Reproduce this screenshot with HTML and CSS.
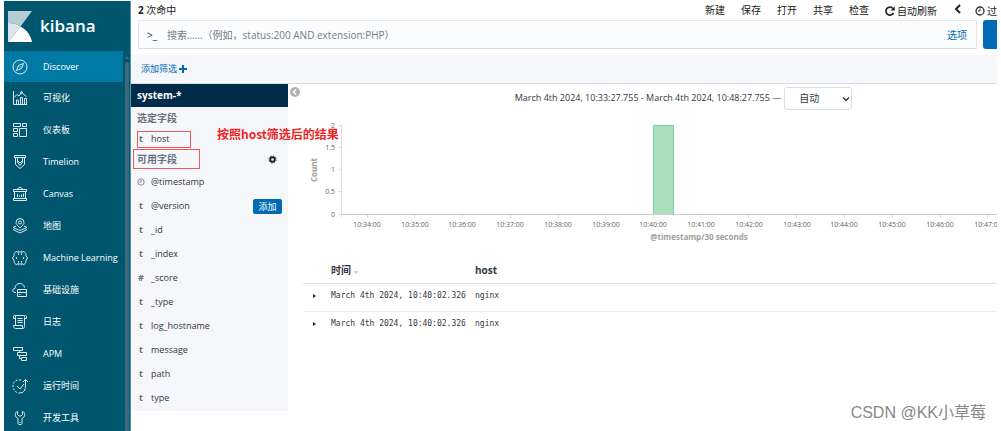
FILE: index.html
```html
<!DOCTYPE html>
<html lang="zh-CN">
<head>
<meta charset="utf-8">
<title>Kibana</title>
<link rel="stylesheet" href="styles.css">
</head>
<body>
<div class="app">
  <aside class="sidebar">
    <div class="brand">
      <svg class="brand-mark" viewBox="0 0 24 31" aria-hidden="true">
        <path fill="#b5cdd5" d="M0 0h24L12.500 15.500C9 13 5 12 0 12z"/>
        <path fill="#dbe7eb" d="M0 12c5 0 9 1 12.500 3.500L0 31z"/>
        <path fill="#fff" d="M12.500 15.500C19 19 23 25 24 31H0z"/>
      </svg>
      <span class="brand-name">kibana</span>
    </div>
    <nav class="nav">
      <a class="nav-item active" href="#"><svg class="nav-icon" viewBox="0 0 16 16"><circle cx="8" cy="8" r="7"/><path d="M11.500 4.500L9.500 9.500 4.500 11.500 6.500 6.500zM7.500 8.500l1-1"/></svg>Discover</a>
      <a class="nav-item" href="#"><svg class="nav-icon" viewBox="0 0 16 16"><path d="M1.500 1v13.500H15M4.500 14v-4h2v4M8.500 14V7.500h2V14M12.500 14V8.500h2V14M2 7.500l3-3 2 1.500 2.500-3.500 5 4"/><circle cx="9.500" cy="2.500" r="1"/></svg>可视化</a>
      <a class="nav-item" href="#"><svg class="nav-icon" viewBox="0 0 16 16"><path d="M1.500 1.500h7v3h-7zM10.500 1.500h4v3h-4zM1.500 6.500h4v3h-4zM1.500 11.500h4v3h-4zM7.500 6.500h7v8h-7z"/></svg>仪表板</a>
      <a class="nav-item" href="#"><svg class="nav-icon" viewBox="0 0 16 16"><path d="M2.500 1.500h11v2h-11zM3.500 3.500v7L8 14.500l4.500-4v-7M5.500 4v4L8 11.500 10.500 8V4M5.500 6.500L8 9l2.500-2.500"/></svg>Timelion</a>
      <a class="nav-item" href="#"><svg class="nav-icon" viewBox="0 0 16 16"><path d="M1.500 3.500h13v2h-13zM2.500 5.500v7M13.500 5.500v7M1.500 12.500h13v2h-13zM5 3.500l3-2.500 3 2.500M5.500 8v3M7.500 9.500V11M9.500 8.500V11M11.500 7.500V11"/></svg>Canvas</a>
      <a class="nav-item" href="#"><svg class="nav-icon" viewBox="0 0 16 16"><path d="M8 10C5 7 4 6 4 4.500a4 4 0 0 1 8 0C12 6 11 7 8 10zM4 8L1 9.500l7 3 7-3L12 8M1 11.500l7 3.500 7-3.500"/><circle cx="8" cy="4.500" r="1.500"/></svg>地图</a>
      <a class="nav-item" href="#"><svg class="nav-icon" viewBox="0 0 16 16"><path d="M5 1.500C2 2 2 4 2 6L.5 8 2 10c0 2 0 4 3 4.500M11 1.500c3 .5 3 2.500 3 4.500l1.500 2-1.500 2c0 2 0 4-3 4.500M6.500 3.500V5M9.500 3.500V5M6.500 11v1.500M9.500 11v1.500M4.500 7v2M11.500 7v2"/><circle cx="6.500" cy="2" r=".8"/><circle cx="9.500" cy="2" r=".8"/><circle cx="6.500" cy="14" r=".8"/><circle cx="9.500" cy="14" r=".8"/></svg>Machine Learning</a>
      <a class="nav-item" href="#"><svg class="nav-icon" viewBox="0 0 16 16"><path d="M4 10.500H3C0 10.500 0 6.500 3 6.500 3 0 12 0 12.500 5.500M5.500 7.500h9v3h-9zM5.500 10.500h9v4h-9zM7.500 9h1M7.500 12.500h1"/></svg>基础设施</a>
      <a class="nav-item" href="#"><svg class="nav-icon" viewBox="0 0 16 16"><path d="M3.500 11.500v-9c0-1.500-2-1.500-2 0v2h2M3 1.500h8.500c1 0 1 1 1 2v8M12.500 4.500h2v-2c0-1-1-1-2-1M1.500 11.500h9v2c0 1 2 1 2-1v-1M1.500 11.500v1c0 1 1 2 2 2h8M5.500 4.500h5M5.500 6.500h5M5.500 8.500h5"/></svg>日志</a>
      <a class="nav-item" href="#"><svg class="nav-icon" viewBox="0 0 16 16"><path d="M1.500 1.500h9v3h-9zM5.500 6.500h9v3h-9zM9.500 11.500h5v3h-5zM7.500 4.500v2M7.500 9.500v3h2"/></svg>APM</a>
      <a class="nav-item" href="#"><svg class="nav-icon" viewBox="0 0 16 16"><path stroke-dasharray="2 1.500" d="M9 2C4 1 1 4 1 8s3 7 6 7"/><path d="M7 15c5 0 6.500-3 6.500-7V1.500M11 4l2.500-2.500L16 4M5 8l3 3 4-5"/></svg>运行时间</a>
      <a class="nav-item" href="#"><svg class="nav-icon" viewBox="0 0 16 16"><path d="M5.500 1.500C2.500 2 2.500 7 6 8.500v5c0 1.500 4 1.500 4 0v-5c3.500-1.500 3.500-6.500.5-7v3L9 6H7L5.500 4.500zM8 12v1"/></svg>开发工具</a>
    </nav>
    <div class="side-scroll"><i class="side-thumb"></i></div>
  </aside>

  <main class="main">
    <header class="topbar">
      <div><b>2</b> 次命中</div>
      <div class="menu">
        <a href="#">新建</a><a href="#">保存</a><a href="#">打开</a><a href="#">共享</a><a href="#">检查</a>
        <a href="#" class="with-icon"><svg class="small-icon" viewBox="0 0 10 10"><path fill="none" stroke="#222" stroke-width="1.700" d="M8.500 7A4 4 0 1 1 8 2.500"/><path fill="#222" d="M9.700.5v4H5.700z"/></svg>自动刷新</a>
        <a href="#" class="back" aria-label="后退"><svg class="small-icon" viewBox="0 0 10 10"><path fill="none" stroke="#222" stroke-width="2" d="M7 1L3 5l4 4"/></svg></a>
        <a href="#" class="with-icon"><svg class="small-icon" viewBox="0 0 10 10" fill="none" stroke="#333"><circle cx="5" cy="5" r="4" stroke-width="1.300"/><path d="M5 2.500V5H3"/></svg>过去</a>
      </div>
    </header>

    <form class="search">
      <div class="search-box">
        <span class="prompt">&gt;_</span>
        <input class="query" type="text" aria-label="搜索" placeholder="搜索……（例如，status:200 AND extension:PHP）">
        <a class="options" href="#">选项</a>
      </div>
      <button class="submit" type="button" aria-label="提交"></button>
    </form>

    <div class="filters"><a href="#">添加筛选<svg class="plus" viewBox="0 0 8 8"><path fill="#006bb4" d="M3 0h2v3h3v2H5v3H3V5H0V3h3z"/></svg></a></div>

    <div class="content">
      <section class="fields">
        <h2 class="index">system-*</h2>
        <h3 class="group">选定字段</h3>
        <div class="field selected"><b class="type">t</b>host<span class="mark mark-host"></span><span class="note">按照host筛选后的结果</span></div>
        <h3 class="group available">可用字段<span class="mark mark-group"></span>
          <button class="gear" type="button" aria-label="设置"><svg viewBox="0 0 10 10"><circle cx="5" cy="5" r="2.500" fill="none" stroke="#222" stroke-width="2"/><circle cx="5" cy="5" r="4" fill="none" stroke="#222" stroke-dasharray="1.600 1.540"/></svg></button></h3>
        <div class="field"><svg class="type" viewBox="0 0 10 10" fill="none" stroke="#69707d"><circle cx="5" cy="5" r="4"/><path d="M5 2.500V5H3"/></svg>@timestamp</div>
        <div class="field"><b class="type">t</b>@version<button class="add" type="button">添加</button></div>
        <div class="field"><b class="type">t</b>_id</div>
        <div class="field"><b class="type">t</b>_index</div>
        <div class="field"><b class="type">#</b>_score</div>
        <div class="field"><b class="type">t</b>_type</div>
        <div class="field"><b class="type">t</b>log_hostname</div>
        <div class="field"><b class="type">t</b>message</div>
        <div class="field"><b class="type">t</b>path</div>
        <div class="field"><b class="type">t</b>type</div>
      </section>
      <button class="collapse" type="button" aria-label="折叠"><svg viewBox="0 0 10 10"><circle cx="5" cy="5" r="5" fill="#b3b3b3"/><path d="M6 2.500L3.500 5 6 7.500" fill="none" stroke="#fff" stroke-width="1.500"/></svg></button>
      <section class="results">
        <div class="range">
          <label for="interval">March 4th 2024, 10:33:27.755 - March 4th 2024, 10:48:27.755 —</label>
          <span class="select-wrap"><select id="interval" class="interval"><option>自动</option></select><svg class="caret" viewBox="0 0 8 8"><path d="M1 2.500l3 3 3-3" fill="none" stroke="#343741" stroke-width="1.500"/></svg></span>
        </div>
        <svg class="chart" width="694" height="134" viewBox="303 112 694 134" role="img" aria-label="Count">
          <g class="axis">
            <path d="M341.500 125v92M338 125.500h4M338 147.500h4M338 169.500h4M338 191.500h4M338 214.500h4"/>
            <path stroke="#ccc" d="M341 214.500h656"/>
            <path d="M367.500 215v3M414.500 215v3M462.500 215v3M510.500 215v3M558.500 215v3M605.500 215v3M653.500 215v3M701.500 215v3M748.500 215v3M796.500 215v3M844.500 215v3M892.500 215v3M940.500 215v3M987.500 215v3"/>
          </g>
          <path fill="#aae0bc" stroke="#82cd9b" d="M653.500 214V125.500h20V214"/>
          <g class="tick-label end">
            <text x="335" y="128">2</text><text x="335" y="150">1.5</text><text x="335" y="172">1</text><text x="335" y="194">0.5</text><text x="335" y="217">0</text>
          </g>
          <g class="tick-label middle">
            <text x="367" y="227">10:34:00</text><text x="415" y="227">10:35:00</text><text x="462" y="227">10:36:00</text><text x="510" y="227">10:37:00</text><text x="558" y="227">10:38:00</text><text x="606" y="227">10:39:00</text><text x="653" y="227">10:40:00</text><text x="701" y="227">10:41:00</text><text x="749" y="227">10:42:00</text><text x="797" y="227">10:43:00</text><text x="844" y="227">10:44:00</text><text x="892" y="227">10:45:00</text><text x="940" y="227">10:46:00</text><text x="988" y="227">10:47:00</text>
          </g>
          <text class="axis-title" x="699" y="240">@timestamp/30 seconds</text>
          <text class="axis-title" transform="translate(317 170) rotate(-90)">Count</text>
        </svg>
        <table class="docs">
          <thead><tr><th class="toggle"></th><th class="time">时间<i class="sort"></i></th><th>host</th></tr></thead>
          <tbody>
            <tr><td><i class="expand"></i></td><td>March 4th 2024, 10:40:02.326</td><td>nginx</td></tr>
            <tr><td><i class="expand"></i></td><td>March 4th 2024, 10:40:02.326</td><td>nginx</td></tr>
          </tbody>
        </table>
      </section>
    </div>
  </main>
  <div class="watermark">CSDN @KK小草莓</div>
</div>
</body>
</html>
```
FILE: styles.css
```css
* { box-sizing: border-box; }
body {
  margin: 0;
  background: #fff;
  color: #343741;
  font: 9px/12px "Open Sans", "Noto Sans CJK SC", sans-serif;
}
a { color: inherit; text-decoration: none; }
button { padding: 0; border: 0; background: none; font: inherit; }
.app {
  position: relative;
  display: flex;
  height: 100vh;
  padding: 1px 4px 0;
  overflow: hidden;
}

.sidebar {
  position: relative;
  flex: 0 0 127px;
  background: #00566f;
  border-right: 1px solid #5596ac;
  color: #fff;
  overflow: hidden;
}
.brand { display: flex; align-items: center; height: 50px; padding-left: 4px; gap: 8px; }
.brand-mark { width: 24px; height: 31px; }
.brand-name { font-size: 17px; line-height: 24px; font-weight: 600; }
.nav-item { display: flex; align-items: center; gap: 15px; height: 32px; padding-left: 8px; white-space: nowrap; }
.nav-item.active { height: 31px; background: #007aa5; margin-right: 7px; }
.nav-icon { flex: none; width: 16px; height: 16px; fill: none; stroke: #dcebef; stroke-width: 1; }
.side-scroll { position: absolute; top: 50px; right: 0; bottom: 0; width: 6px; padding-top: 11px; background: #00566f; }
.side-scroll::before {
  content: "";
  position: absolute;
  top: 5px;
  left: 1px;
  border: 2px solid transparent;
  border-top: 0;
  border-bottom: 3px solid #3d6d81;
}
.side-thumb { display: block; height: 100%; margin: 0 1px; background: #3d6a7e; border-radius: 2px 2px 0 0; }

.main { flex: 1; min-width: 0; overflow: hidden; }
.topbar {
  display: flex;
  justify-content: space-between;
  height: 19px;
  padding-left: 7px;
  font-size: 10px;
  line-height: 18px;
  color: #222;
  white-space: nowrap;
}
.menu { display: flex; gap: 16px; margin-right: -10px; }
.back { margin-right: -4px; }
.with-icon { display: flex; align-items: center; gap: 2px; }
.small-icon { width: 10px; height: 10px; }
.search { display: flex; gap: 6px; height: 29px; margin-left: 7px; }
.search-box {
  display: flex;
  align-items: center;
  flex: 1;
  padding: 0 9px 0 8px;
  background: #fbfcfd;
  border: 1px solid #e4e7ea;
  border-bottom-color: #d9dde2;
}
.prompt { width: 20px; font-size: 10px; }
.query { flex: 1; min-width: 0; padding: 0; border: 0; background: none; font: 10px/16px "Open Sans", "Noto Sans CJK SC", sans-serif; }
.query::placeholder { color: #757b87; opacity: 1; }
.options { color: #006bb4; font-size: 10px; }
.submit { width: 14px; background: #006bb4; border-radius: 3px 0 0 3px; }
.filters {
  display: flex;
  align-items: center;
  height: 29px;
  margin-top: 6px;
  padding-left: 10px;
  background: #f5f7fa;
  border-bottom: 1px solid #d9dde4;
  color: #006bb4;
}
.plus { width: 8px; height: 8px; margin-left: 2px; vertical-align: -1px; }

.content { display: flex; align-items: flex-start; }
.fields { flex: 0 0 157px; padding-bottom: 1px; background: #f5f7fa; }
.index { height: 23px; margin: 0; padding-left: 6px; background: #002b49; color: #fff; font-size: 10px; line-height: 23px; }
.group { height: 22px; margin: 0; padding-left: 6px; color: #69707d; font-size: 10px; line-height: 22px; }
.group.available { position: relative; display: flex; justify-content: space-between; height: 21px; padding-right: 11px; line-height: 21px; }
.gear { width: 9px; height: 21px; }
.gear svg { display: block; width: 9px; height: 9px; }
.field { position: relative; display: flex; align-items: center; height: 24px; padding: 0 6px; }
.field.selected { height: 20px; }
.type { width: 8px; height: 12px; margin-right: 6px; color: #69707d; text-align: center; }
.add { margin-left: auto; width: 29px; height: 15px; border-radius: 2px; background: #006bb4; color: #fff; line-height: 15px; }
.mark { position: absolute; border: 1px solid #f0585c; }
.mark-host { top: 2px; left: 6px; width: 54px; height: 17px; }
.mark-group { top: 0; left: 2px; width: 67px; height: 20px; }
.note { position: absolute; top: -4px; left: 86px; z-index: 1; color: #ee2424; font: 700 12px/18px "Noto Sans CJK SC", sans-serif; white-space: nowrap; }

.collapse { flex: none; width: 10px; height: 10px; margin: 3px 3px 0 2px; }
.collapse svg { display: block; }
.results { flex: 1; min-width: 0; overflow: hidden; }
.range { display: flex; align-items: center; justify-content: center; gap: 3px; height: 28px; margin-left: 67px; white-space: nowrap; }
.select-wrap { position: relative; }
.interval { appearance: none; width: 68px; height: 23px; padding: 0 14px; border: 1px solid #d9dfe9; border-radius: 3px; background: #fff; color: #343741; font: 10px/16px "Open Sans", "Noto Sans CJK SC", sans-serif; }
.caret { position: absolute; top: 8px; right: 2px; width: 8px; height: 8px; }
.chart { display: block; }
.axis { fill: none; stroke: #ddd; }
.tick-label { fill: #666; font-size: 7px; }
.end { text-anchor: end; }
.middle { text-anchor: middle; }
.axis-title { fill: #a0a0a0; font-size: 8px; font-weight: 700; text-anchor: middle; }

.docs { width: 100%; margin-top: 12px; border-collapse: collapse; table-layout: fixed; }
.docs th { height: 25px; padding: 0; border-bottom: 1px solid #d9dfe9; font-size: 10px; text-align: left; }
.docs td { height: 28px; padding: 0 0 3px; border-bottom: 1px solid #edf0f3; font: 8px/12px "DejaVu Sans Mono", monospace; }
.docs tr:last-child td { border-bottom: 0; }
.toggle { width: 28px; }
.time { width: 144px; }
.sort { display: inline-block; margin-left: 2px; border: 3px solid transparent; border-top-color: #ccd2dd; border-bottom: 0; }
.expand { display: block; width: 0; margin-left: 10px; border: 2px solid transparent; border-left: 3px solid #222; border-right: 0; }

.watermark { position: absolute; right: 15px; bottom: 8px; color: #888; font: 16px/20px "Liberation Sans", "Noto Sans CJK SC", sans-serif; }
```
